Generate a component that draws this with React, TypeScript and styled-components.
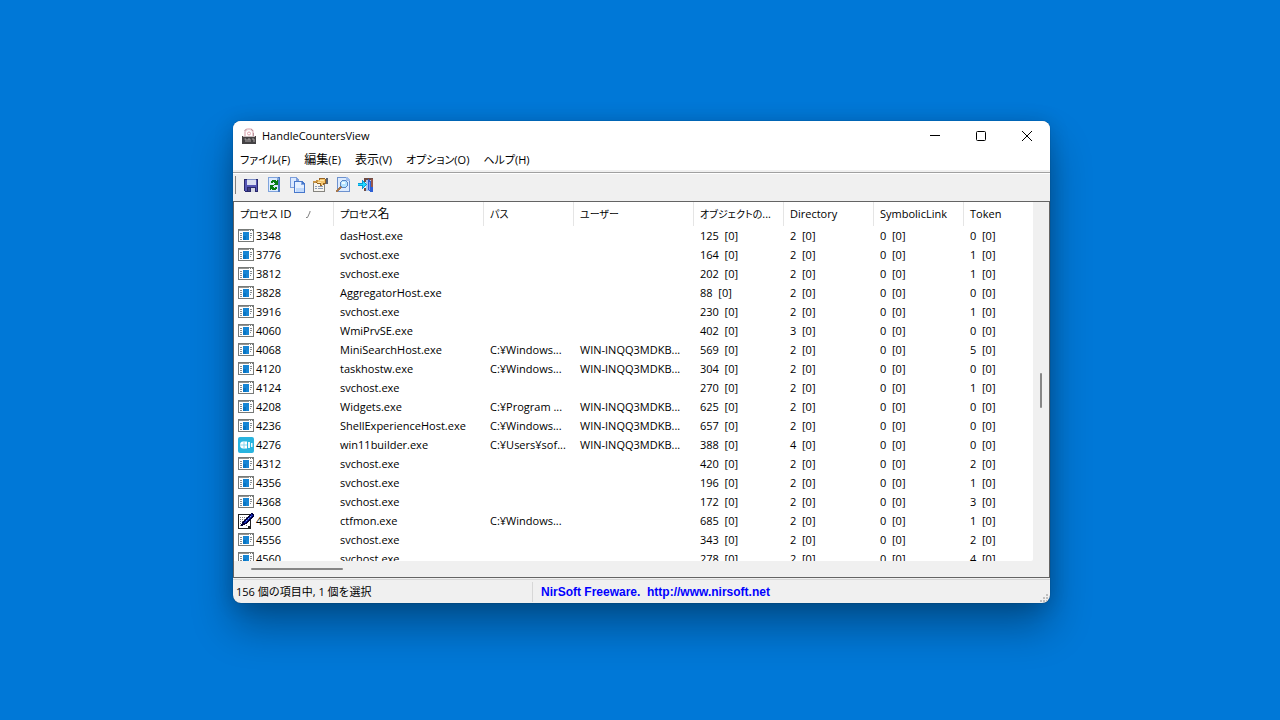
import React from "react";
import styled, { createGlobalStyle } from "styled-components";

const GlobalStyle = createGlobalStyle`
  *, *::before, *::after { box-sizing: border-box; }
  body {
    margin: 0;
    background: #0078d7;
    color: #000;
    font-family: "Open Sans", "Noto Sans CJK JP", sans-serif;
    font-size: 11px;
    line-height: 20px;
  }
  button {
    margin: 0;
    padding: 0;
    border: 0;
    background: none;
    color: inherit;
    font: inherit;
  }
`;

const Desktop = styled.main`
  display: flex;
  align-items: center;
  justify-content: center;
  min-height: 100vh;
  padding: 4px 0 0 3px;
  background: #0078d7;
`;

const Window = styled.section`
  display: flex;
  flex-direction: column;
  width: 100%;
  max-width: 817px;
  overflow: hidden;
  border-radius: 8px;
  background: #f0f0f0;
  box-shadow: 0 0 1px rgba(0, 0, 0, 0.6), 0 24px 42px rgba(0, 0, 0, 0.32), 0 2px 20px rgba(0, 0, 0, 0.16);
`;

const TitleBar = styled.header`
  display: flex;
  align-items: center;
  height: 29px;
  padding-left: 8px;
  background: #fff;
`;

const Title = styled.h1`
  flex: 1;
  margin: 0 0 0 5px;
  font-size: 11px;
  font-weight: 400;
`;

const CaptionButton = styled.button`
  display: flex;
  align-items: center;
  justify-content: center;
  width: 46px;
  height: 29px;
`;

const Kana = styled.span<{ $small?: boolean }>`
  font-size: ${(p) => (p.$small ? "10px" : "11px")};
  font-feature-settings: "palt";
`;

const Kanji = styled.span`
  font-size: 12px;
`;

const MenuBar = styled.nav`
  display: flex;
  gap: 14px;
  height: 20px;
  padding-left: 7px;
  background: #fff;
`;

const MenuItem = styled.button`
  height: 20px;
  white-space: nowrap;
`;

const MenuEdge = styled.div`
  height: 2px;
  background: #f0f0f0;
`;

const ToolBar = styled.div`
  display: flex;
  align-items: center;
  gap: 7px;
  height: 29px;
  padding: 0 0 4px 2px;
  border-top: 1px solid #a0a0a0;
  box-shadow: inset 0 1px #fff;
`;

const Grip = styled.span`
  width: 1px;
  height: 18px;
  background: #808080;
`;

const ToolButton = styled.button`
  display: flex;
  width: 16px;
  height: 16px;
`;

const ListView = styled.div`
  display: grid;
  grid-template-columns: 1fr 16px;
  grid-template-rows: 359px 16px;
  border: 1px solid #646464;
`;

const Viewport = styled.div`
  overflow: hidden;
  border-bottom-right-radius: 2px;
  background: #fff;
`;

const Table = styled.table`
  width: 100%;
  table-layout: fixed;
  border-collapse: separate;
  border-spacing: 0;
`;

const HeadCell = styled.th`
  height: 24px;
  padding: 0 0 0 6px;
  border-right: 1px solid #e5e5e5;
  font-weight: 400;
  text-align: left;
  white-space: nowrap;
  overflow: hidden;
  &:last-child { border-right: 0; }
`;

const SortMark = styled.svg`
  margin-left: 15px;
`;

const Cell = styled.td`
  height: 19px;
  padding: 0 0 0 6px;
  line-height: 19px;
  white-space: pre;
  overflow: hidden;
`;

const IdCell = styled(Cell)`
  padding-left: 4px;
`;

const IdContent = styled.span`
  display: flex;
  align-items: center;
  gap: 2px;
`;

const VerticalBar = styled.div`
  display: flex;
  justify-content: center;
  padding-top: 171px;
`;

const HorizontalBar = styled.div`
  display: flex;
  align-items: center;
  padding-left: 17px;
`;

const Thumb = styled.span<{ $vertical?: boolean }>`
  width: ${(p) => (p.$vertical ? "2px" : "92px")};
  height: ${(p) => (p.$vertical ? "35px" : "2px")};
  border-radius: 1px;
  background: #868686;
`;

const StatusBar = styled.footer`
  display: flex;
  align-items: stretch;
  height: 25px;
  padding-top: 3px;
  border-top: 1px solid #f0f0f0;
  box-shadow: inset 0 1px #d7d7d7;
`;

const StatusText = styled.span`
  width: 300px;
  height: 20px;
  padding-left: 3px;
  border-right: 1px solid #d7d7d7;
`;

const StatusLink = styled.a`
  flex: 1;
  padding-left: 8px;
  color: #0000ff;
  font-family: "Liberation Sans", sans-serif;
  font-size: 12px;
  font-weight: 700;
  text-decoration: none;
  white-space: pre;
`;

const SizeGrip = styled.svg`
  align-self: flex-end;
  margin: 0 2px 1px 0;
`;

const Icon = ({ children }: { children: React.ReactNode }) => (
  <svg width="16" height="16" viewBox="0 0 16 16" shapeRendering="crispEdges" aria-hidden="true">
    {children}
  </svg>
);

const AppIcon = () => (
  <svg width="16" height="16" viewBox="0 0 16 16" aria-hidden="true">
    <path d="M4 9V4.500C4 2 6 1 8 1s4 1 4 3.500V9" fill="none" stroke="#e9ccd2" strokeWidth="2" />
    <path d="M3.500 3l2-2M10 1l2 2M12.500 5v3" fill="none" stroke="#b9959d" />
    <circle cx="8" cy="5.500" r="1.500" fill="#fff" stroke="#dfa3ae" />
    <rect x="1" y="8" width="14" height="8" fill="#444244" />
    <path d="M2 8.500h12" stroke="#c9bcbf" />
    <path d="M3.500 11h1.500v3M7 14v-3h2v3M11 11h2v3" fill="none" stroke="#a9a4a6" />
  </svg>
);

const SaveIcon = () => (
  <Icon>
    <path d="M1 2h14v13H2l-1-1z" fill="#28286c" />
    <path d="M2 3h12v11H2z" fill="#5656b4" />
    <path d="M4 2h9v6H4z" fill="#d9def2" />
    <path d="M4 2h9v1H4z" fill="#7f8fc7" />
    <path d="M4 10h9v5H4z" fill="#28286c" />
    <path d="M8 11h4v4H8z" fill="#d6d8e4" />
    <path d="M5 11h2v3H5z" fill="#41417f" />
  </Icon>
);

const RefreshIcon = () => (
  <Icon>
    <path d="M2 0h12v15H2z" fill="#7fa3dc" />
    <path d="M3 1h10v13H3z" fill="#dcebff" />
    <path d="M12 0h2v15h-2z" fill="#4c78c0" />
    <path d="M11 1h2v2h-2z" fill="#86a8de" />
    <path d="M5 4h1V3h4v1h1V3h1v5H8V7h1V6H8V5H7v1H5z" fill="#087d16" />
    <path d="M4 8h4v1H7v1h1v1h1v-1h2v2h-1v1H6v-1H5v1H4z" fill="#087d16" />
  </Icon>
);

const CopyIcon = () => (
  <Icon>
    <path d="M1 0h7l2 3v8H1z" fill="#7c9edb" />
    <path d="M2 1h5v3h2v6H2z" fill="#dbe9ff" />
    <path d="M5 4h8l3 3v9H5z" fill="#4777cb" />
    <path d="M6 5h6v3h3v7H6z" fill="#e5f0ff" />
    <path d="M7 11h8v4H7z" fill="#c1d9fb" />
    <path d="M12 5h1v2h2v1h-3z" fill="#86a9e2" />
  </Icon>
);

const PropertiesIcon = () => (
  <Icon>
    <path d="M1 5h12v10H1z" fill="#85847f" />
    <path d="M2 6h10v8H2z" fill="#f7f5ef" />
    <path d="M3 9h2v1H3zM6 9h5v1H6zM3 11h2v1H3zM6 11h5v1H6z" fill="#8a9cb9" />
    <path d="M4 3h3V1h6v1h3v5h-4v1h-2v1H8V7H5V6H4z" fill="#966322" />
    <path d="M5 3h3V2h5v4h-2v2H9V6H5z" fill="#f2c36c" />
    <path d="M1 4h3V3h2v2H4v1H1z" fill="#c79445" />
    <path d="M14 1h2v6h-2z" fill="#576174" />
    <path d="M8 3h4v1H8zM6 5h3v1H6z" fill="#ffe6a6" />
  </Icon>
);

const FindIcon = () => (
  <Icon>
    <path d="M2 0h10l3 3v12H2z" fill="#6d91ce" />
    <path d="M3 1h8v3h3v10H3z" fill="#dcebff" />
    <path d="M11 0h1l3 3v1h-4z" fill="#9fbdec" />
    <path d="M7 3h4v1h1v1h1v4h-1v1h-1v1H7v-1H6V9H5V5h1V4h1z" fill="#5b86c4" />
    <path d="M7 4h4v1h1v4h-1v1H7V9H6V5h1z" fill="#b5e3ff" />
    <path d="M7 5h3v2H7z" fill="#effbff" />
    <path d="M5 9h1v1h1v1H6v1H5v1H4v1H3v1H1v-2h1v-1h1v-1h1v-1h1z" fill="#a7784d" />
  </Icon>
);

const ExitIcon = () => (
  <Icon>
    <path d="M6 1h9v2H8v2H6zM6 11h2v3H6z" fill="#704c44" />
    <path d="M8 3h5v11H8z" fill="#a9c6ee" />
    <path d="M13 2h2v13h-2z" fill="#97584b" />
    <path d="M10 2l3 2v12l-3-3z" fill="#2e5fd4" />
    <path d="M11 5h1v8h-1z" fill="#79a0f4" />
    <path d="M13 10h2v5h-2z" fill="#2e5fd4" />
    <path d="M0 6h4V3h1v1h1v1h1v1h1v1h1v1H8v1H7v1H6v1H5v1H4V9H0z" fill="#0798d8" />
    <path d="M0 7h5V5h1v1h1v1h1v1H7v1H6v1H5V8H0z" fill="#20dcff" />
  </Icon>
);

const ProgramIcon = () => (
  <Icon>
    <path d="M0 1h16v13H0z" fill="#777a78" />
    <path d="M1 3h14v10H1z" fill="#fff" />
    <path d="M1 2h10v1H1z" fill="#929492" />
    <path d="M11 2h1v1h-1zM13 2h1v1h-1z" fill="#fff" />
    <path d="M2 5h2v1H2zM2 7h2v1H2zM2 9h2v1H2zM2 11h2v1H2zM12 5h2v1h-2zM12 7h2v1h-2zM12 9h1v1h-1z" fill="#868b8e" />
    <path d="M5 4h6v8H5z" fill="#1685d4" />
    <path d="M5 8h3v4H5z" fill="#0875c4" />
  </Icon>
);

const BuilderIcon = () => (
  <svg width="16" height="16" viewBox="0 0 16 16" aria-hidden="true">
    <rect width="16" height="16" rx="2" fill="#28b4df" />
    <path d="M5 4.500h4v7H5c-4 0-4-7 0-7z" fill="#fff" />
    <path d="M10 5h2v6h-2zM13 6h1.500v4H13z" fill="#e7f8fd" />
    <path d="M2 8h7M6 5v6" stroke="#8ad6ee" />
  </svg>
);

const PenIcon = () => (
  <Icon>
    <path d="M0 1h13v15H0z" fill="#222" />
    <path d="M1 2h11v11h-2v2H1z" fill="#fff" />
    <path d="M2 4h1v1H2zM4 4h1v1H4zM6 4h1v1H6zM8 4h1v1H8zM2 6h1v1H2zM4 6h1v1H4zM6 6h1v1H6zM2 8h1v1H2zM4 8h1v1H4zM2 10h1v1H2zM2 12h1v1H2zM8 12h1v1H8z" fill="#777" />
    <path d="M13 0h2v1h1v3h-1v1h-1v1h-1v1h-1v1h-1v1h-1v1H9v1H7v1H5v1H3v-2h1V9h1V8h1V7h1V6h1V5h1V4h1V3h1V2h1V1h1z" fill="#00003c" />
    <path d="M13 1h1v1h1v1h-1v1h-1v1h-1v1h-1v1h-1v1H9v1H8v1H6V9h1V8h1V7h1V6h1V5h1V4h1V3h1z" fill="#1628b8" />
    <path d="M12 3h1v1h-1zM10 5h1v1h-1zM8 7h1v1H8z" fill="#7aa2ff" />
  </Icon>
);

type RowKind = "program" | "builder" | "pen";
type Row = [string, string, string, string, number, number, number, number, RowKind?];

const USER = "WIN-INQQ3MDKB...";
const WINDOWS = "C:¥Windows...";

const rows: Row[] = [
  ["3348", "dasHost.exe", "", "", 125, 2, 0, 0],
  ["3776", "svchost.exe", "", "", 164, 2, 0, 1],
  ["3812", "svchost.exe", "", "", 202, 2, 0, 1],
  ["3828", "AggregatorHost.exe", "", "", 88, 2, 0, 0],
  ["3916", "svchost.exe", "", "", 230, 2, 0, 1],
  ["4060", "WmiPrvSE.exe", "", "", 402, 3, 0, 0],
  ["4068", "MiniSearchHost.exe", WINDOWS, USER, 569, 2, 0, 5],
  ["4120", "taskhostw.exe", WINDOWS, USER, 304, 2, 0, 0],
  ["4124", "svchost.exe", "", "", 270, 2, 0, 1],
  ["4208", "Widgets.exe", "C:¥Program ...", USER, 625, 2, 0, 0],
  ["4236", "ShellExperienceHost.exe", WINDOWS, USER, 657, 2, 0, 0],
  ["4276", "win11builder.exe", "C:¥Users¥sof...", USER, 388, 4, 0, 0, "builder"],
  ["4312", "svchost.exe", "", "", 420, 2, 0, 2],
  ["4356", "svchost.exe", "", "", 196, 2, 0, 1],
  ["4368", "svchost.exe", "", "", 172, 2, 0, 3],
  ["4500", "ctfmon.exe", WINDOWS, "", 685, 2, 0, 1, "pen"],
  ["4556", "svchost.exe", "", "", 343, 2, 0, 2],
  ["4560", "svchost.exe", "", "", 278, 2, 0, 4],
];

const menus: { key: string; label: React.ReactNode }[] = [
  { key: "(F)", label: <Kana>ファイル</Kana> },
  { key: "(E)", label: <Kanji>編集</Kanji> },
  { key: "(V)", label: <Kanji>表示</Kanji> },
  { key: "(O)", label: <Kana>オプション</Kana> },
  { key: "(H)", label: <Kana>ヘルプ</Kana> },
];

const tools: [string, () => React.ReactElement][] = [
  ["保存", SaveIcon],
  ["更新", RefreshIcon],
  ["コピー", CopyIcon],
  ["プロパティ", PropertiesIcon],
  ["検索", FindIcon],
  ["終了", ExitIcon],
];

const rowIcons: Record<RowKind, () => React.ReactElement> = {
  program: ProgramIcon,
  builder: BuilderIcon,
  pen: PenIcon,
};

const columnWidths = [100, 150, 90, 120, 90, 90, 90];

export default function App() {
  return (
    <>
      <GlobalStyle />
      <Desktop>
        <Window>
          <TitleBar>
            <AppIcon />
            <Title>HandleCountersView</Title>
            <CaptionButton aria-label="最小化">
              <svg width="10" height="10" viewBox="0 0 10 10" shapeRendering="crispEdges">
                <path d="M0 4h10v1H0z" />
              </svg>
            </CaptionButton>
            <CaptionButton aria-label="最大化">
              <svg width="10" height="10" viewBox="0 0 10 10">
                <rect x="0.500" y="0.500" width="9" height="9" rx="1" fill="none" stroke="#000" />
              </svg>
            </CaptionButton>
            <CaptionButton aria-label="閉じる">
              <svg width="10" height="10" viewBox="0 0 10 10">
                <path d="M0 0l10 10M10 0L0 10" stroke="#000" />
              </svg>
            </CaptionButton>
          </TitleBar>
          <MenuBar>
            {menus.map(({ key, label }) => (
              <MenuItem key={key}>
                {label}
                {key}
              </MenuItem>
            ))}
          </MenuBar>
          <MenuEdge />
          <ToolBar role="toolbar">
            <Grip />
            {tools.map(([label, Glyph]) => (
              <ToolButton key={label} aria-label={label}>
                <Glyph />
              </ToolButton>
            ))}
          </ToolBar>
          <ListView>
            <Viewport>
              <Table>
                <colgroup>
                  {columnWidths.map((width, i) => (
                    <col key={i} width={width} />
                  ))}
                  <col />
                </colgroup>
                <thead>
                  <tr>
                    <HeadCell>
                      <Kana $small>プロセス</Kana> ID
                      <SortMark width="5" height="7" viewBox="0 0 5 7" aria-hidden="true">
                        <path d="M0 6.500h1.500L4 1v-1" fill="none" stroke="#808080" />
                      </SortMark>
                    </HeadCell>
                    <HeadCell><Kana $small>プロセス</Kana><Kanji>名</Kanji></HeadCell>
                    <HeadCell><Kana $small>パス</Kana></HeadCell>
                    <HeadCell><Kana $small>ユーザー</Kana></HeadCell>
                    <HeadCell><Kana $small>オブジェクトの</Kana>...</HeadCell>
                    <HeadCell>Directory</HeadCell>
                    <HeadCell>SymbolicLink</HeadCell>
                    <HeadCell>Token</HeadCell>
                  </tr>
                </thead>
                <tbody>
                  {rows.map(([id, name, path, user, objects, dirs, links, tokens, kind = "program"]) => {
                    const Glyph = rowIcons[kind];
                    return (
                      <tr key={id}>
                        <IdCell>
                          <IdContent>
                            <Glyph />
                            {id}
                          </IdContent>
                        </IdCell>
                        <Cell>{name}</Cell>
                        <Cell>{path}</Cell>
                        <Cell>{user}</Cell>
                        {[objects, dirs, links, tokens].map((count, i) => (
                          <Cell key={i}>{`${count}  [0]`}</Cell>
                        ))}
                      </tr>
                    );
                  })}
                </tbody>
              </Table>
            </Viewport>
            <VerticalBar>
              <Thumb $vertical />
            </VerticalBar>
            <HorizontalBar>
              <Thumb />
            </HorizontalBar>
          </ListView>
          <StatusBar>
            <StatusText>156 個の項目中, 1 個を選択</StatusText>
            <StatusLink href="http://www.nirsoft.net">{"NirSoft Freeware.  http://www.nirsoft.net"}</StatusLink>
            <SizeGrip width="8" height="8" viewBox="0 0 8 8" shapeRendering="crispEdges" aria-hidden="true">
              <path d="M6 0h2v2H6zM3 3h2v2H3zM6 3h2v2H6zM0 6h2v2H0zM3 6h2v2H3zM6 6h2v2H6z" fill="#bfbfbf" />
            </SizeGrip>
          </StatusBar>
        </Window>
      </Desktop>
    </>
  );
}
